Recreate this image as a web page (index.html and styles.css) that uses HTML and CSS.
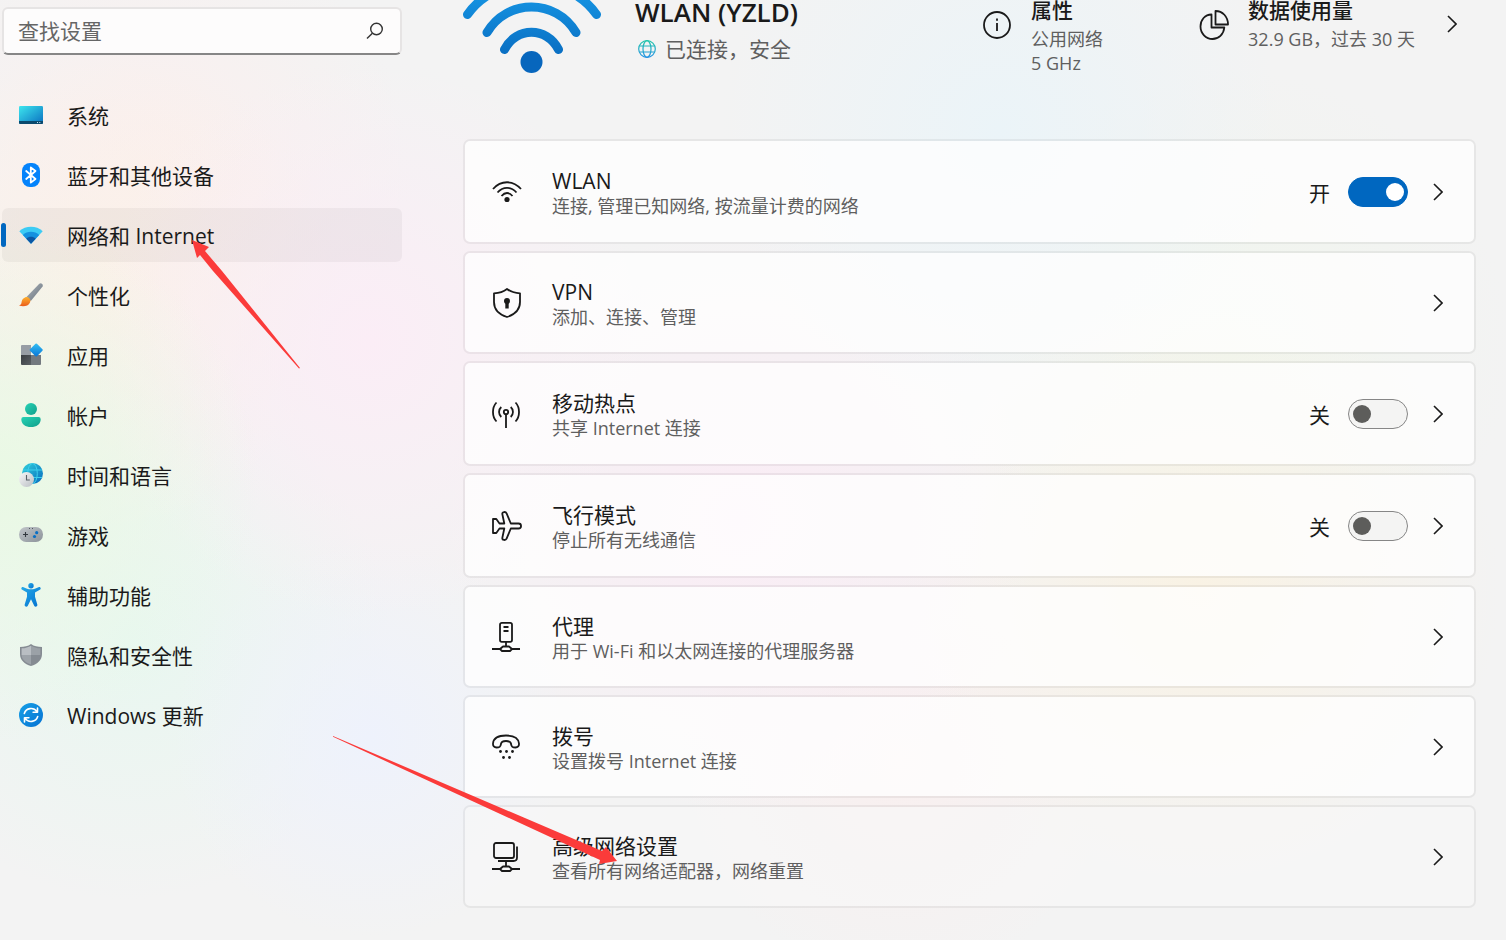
FILE: index.html
```html
<!DOCTYPE html>
<html lang="zh-CN">
<head>
    <meta charset="UTF-8">
    <meta name="viewport" content="width=device-width, initial-scale=1.0">
    <title>设置 - 网络和 Internet</title>
    <link rel="stylesheet" href="styles.css">
</head>
<body>
    <div class="page">
        <aside class="sidebar">
            <form class="search">
                <input class="search-input" type="text" placeholder="查找设置" aria-label="查找设置">
                <button class="search-button" type="button" aria-label="搜索">
                    <svg width="18" height="18" viewBox="0 0 18 18" fill="none" stroke="#333" stroke-width="1.4">
                        <circle cx="10.5" cy="7" r="5.8"/>
                        <path d="M6.4 11.2L1 16.6"/>
                    </svg>
                </button>
            </form>

            <nav class="menu">
                <a class="menu-item" href="#">
                    <svg class="menu-icon" viewBox="0 0 24 24">
                        <defs><linearGradient id="sys" x1="0" y1="0" x2="1" y2="1"><stop offset="0" stop-color="#3de6ee"/><stop offset="1" stop-color="#0a6fc0"/></linearGradient></defs>
                        <rect y="3" width="24" height="18" rx="1.3" fill="url(#sys)"/>
                        <path d="M0 18h24v1.7a1.3 1.3 0 0 1-1.3 1.3H1.3A1.3 1.3 0 0 1 0 19.700z" fill="#0b4a6e"/>
                        <path d="M18 19.500h1M20.300 19.500h1" stroke="#c9e8f5" stroke-width="1"/>
                    </svg>
                    <span>系统</span>
                </a>
                <a class="menu-item" href="#">
                    <svg class="menu-icon" viewBox="0 0 24 24">
                        <rect x="3" width="18" height="24" rx="8" fill="#0483fb"/>
                        <path d="M7.200 8l9.300 8-4.700 3.600V4.400L16.500 8l-9.300 8" fill="none" stroke="#fff" stroke-width="1.800" stroke-linejoin="round" stroke-linecap="round"/>
                    </svg>
                    <span>蓝牙和其他设备</span>
                </a>
                <a class="menu-item active" href="#" aria-current="page">
                    <svg class="menu-icon" viewBox="0 0 24 24">
                        <path d="M0.300 8.200C6.500 2.300 17.500 2.300 23.700 8.200L12 20.700z" fill="#3ccbf4"/>
                        <path d="M3.800 11.900C8.200 7.700 15.800 7.700 20.200 11.900L12 20.700z" fill="#1591df"/>
                        <path d="M7.300 15.700C9.900 13.200 14.100 13.200 16.700 15.700L12 20.700z" fill="#0b57a4"/>
                    </svg>
                    <span>网络和 Internet</span>
                </a>
                <a class="menu-item" href="#">
                    <svg class="menu-icon" viewBox="0 0 24 24">
                        <defs>
                            <linearGradient id="brush" x1="0" y1="0" x2="1" y2="1"><stop offset="0" stop-color="#b0b7be"/><stop offset="1" stop-color="#65707a"/></linearGradient>
                            <linearGradient id="bristle" x1="0" y1="0" x2="0" y2="1"><stop offset="0" stop-color="#fdb12c"/><stop offset="1" stop-color="#ea5c1c"/></linearGradient>
                        </defs>
                        <path d="M7.500 14L20.300.8c1.700-1.500 4.200.4 3.300 2.600L11.800 18z" fill="url(#brush)"/>
                        <path d="M6 14.500c3-1.700 6.600 1.800 5 5-1.700 3.800-6.700 4.600-11 3.100 2.500-.8 2.300-2 2.700-4 .4-2 1.500-3.300 3.300-4.100z" fill="url(#bristle)"/>
                    </svg>
                    <span>个性化</span>
                </a>
                <a class="menu-item" href="#">
                    <svg class="menu-icon" viewBox="0 0 24 24">
                        <defs>
                            <linearGradient id="appDark" x1="0" y1="0" x2="1" y2="1"><stop offset="0" stop-color="#3a3e42"/><stop offset="1" stop-color="#5b6065"/></linearGradient>
                            <linearGradient id="appBlue" x1="0" y1="0" x2="1" y2="1"><stop offset="0" stop-color="#35c1f3"/><stop offset="1" stop-color="#0874d7"/></linearGradient>
                        </defs>
                        <path d="M3 2h9v10H2V3a1 1 0 0 1 1-1z" fill="#979da4"/>
                        <path d="M2 12h10v10H3a1 1 0 0 1-1-1z" fill="url(#appDark)"/>
                        <path d="M12 12h10v9a1 1 0 0 1-1 1h-9z" fill="#73797f"/>
                        <rect x="12.300" y="2.100" width="9.800" height="9.800" rx="1" transform="rotate(45 17.200 7)" fill="url(#appBlue)"/>
                    </svg>
                    <span>应用</span>
                </a>
                <a class="menu-item" href="#">
                    <svg class="menu-icon" viewBox="0 0 24 24">
                        <defs><linearGradient id="user" x1="0" y1="0" x2="1" y2="1"><stop offset="0" stop-color="#27d3b5"/><stop offset="1" stop-color="#109f8b"/></linearGradient></defs>
                        <circle cx="12" cy="6" r="6" fill="url(#user)"/>
                        <path d="M4.500 14h15a2.200 2.200 0 0 1 2.200 2.200c0 5-4.200 7.800-9.700 7.800s-9.700-2.800-9.700-7.800A2.200 2.200 0 0 1 4.500 14z" fill="url(#user)"/>
                    </svg>
                    <span>帐户</span>
                </a>
                <a class="menu-item" href="#">
                    <svg class="menu-icon" viewBox="0 0 24 24">
                        <defs>
                            <linearGradient id="world" x1="0" y1="0" x2="1" y2="1"><stop offset="0" stop-color="#31d2dc"/><stop offset="1" stop-color="#0869be"/></linearGradient>
                            <linearGradient id="clock" x1="0" y1="0" x2="1" y2="1"><stop offset="0" stop-color="#fafafa"/><stop offset="1" stop-color="#b9bdc3"/></linearGradient>
                        </defs>
                        <circle cx="13.500" cy="10.500" r="10.500" fill="url(#world)"/>
                        <g fill="none" stroke="#3fd0ec" stroke-width="1"><ellipse cx="13.500" cy="10.500" rx="4.800" ry="10"/><path d="M4 7h19M4 14.500h19"/></g>
                        <circle cx="7.500" cy="16.500" r="7.500" fill="url(#clock)"/>
                        <path d="M7.500 12v5h3.300" fill="none" stroke="#596068" stroke-width="1.100"/>
                    </svg>
                    <span>时间和语言</span>
                </a>
                <a class="menu-item" href="#">
                    <svg class="menu-icon" viewBox="0 0 24 24">
                        <defs><linearGradient id="pad" x1="0" y1="0" x2="1" y2="1"><stop offset="0" stop-color="#c1c6ca"/><stop offset="1" stop-color="#8b9299"/></linearGradient></defs>
                        <rect y="4" width="24" height="15" rx="7.200" fill="url(#pad)"/>
                        <path d="M6.500 9v5M4 11.500h5" stroke="#33393f" stroke-width="1.100"/>
                        <path d="M10 5.500h1M13 5.500h1" stroke="#51585e" stroke-width="1"/>
                        <circle cx="17.700" cy="9.700" r="1.600" fill="#0a6fc4"/><circle cx="15.500" cy="13.500" r="1.600" fill="#0a6fc4"/>
                    </svg>
                    <span>游戏</span>
                </a>
                <a class="menu-item" href="#">
                    <svg class="menu-icon" viewBox="0 0 24 24">
                        <defs><linearGradient id="man" x1="0" y1="0" x2="1" y2="1"><stop offset="0" stop-color="#25a9e8"/><stop offset="1" stop-color="#0371cf"/></linearGradient></defs>
                        <g fill="url(#man)">
                            <circle cx="12" cy="2.700" r="2.700"/>
                            <path d="M4.500 4.200c2.400 1.200 4.700 2.100 7.500 2.100s5.100-.9 7.500-2.100c2-.8 3.100 1.700 1.300 2.600L16 9.400v4.400l2.300 7.800c.5 2-2.300 3.100-3.100 1.100L12 16.300l-3.200 6.400c-.8 2-3.600.9-3.100-1.100L8 13.800V9.400L3.200 6.800C1.400 5.900 2.500 3.400 4.500 4.200z"/>
                        </g>
                    </svg>
                    <span>辅助功能</span>
                </a>
                <a class="menu-item" href="#">
                    <svg class="menu-icon" viewBox="0 0 24 24">
                        <path d="M12 1c3 2.200 6.500 3 11 3v7c0 6-4.500 10-11 12C5.500 21 1 17 1 11V4c4.500 0 8-.8 11-3z" fill="#858b92"/>
                        <path d="M12 2.700V12H2.600V5.300C6.500 5.200 9.300 4.300 12 2.700z" fill="#b9bec3"/>
                        <path d="M12 2.700V12h9.400V5.300C17.500 5.200 14.700 4.300 12 2.700z" fill="#9ba1a7"/>
                        <path d="M12 12H2.600c.3 4.700 4 7.800 9.400 9.500z" fill="#9da3a9"/>
                    </svg>
                    <span>隐私和安全性</span>
                </a>
                <a class="menu-item" href="#">
                    <svg class="menu-icon" viewBox="0 0 24 24">
                        <defs><linearGradient id="upd" x1="0" y1="0" x2="1" y2="1"><stop offset="0" stop-color="#17a0e6"/><stop offset="1" stop-color="#0672d3"/></linearGradient></defs>
                        <circle cx="12" cy="12" r="12" fill="url(#upd)"/>
                        <path d="M5.300 10.500C7 4.800 14.500 3.800 18 8.600M18.700 13.500C17 19.200 9.500 20.200 6 15.400M18.500 5v4.300h-4.400M5.500 19v-4.300h4.400" fill="none" stroke="#fff" stroke-width="1.600" stroke-linecap="round" stroke-linejoin="round"/>
                    </svg>
                    <span>Windows 更新</span>
                </a>
            </nav>
        </aside>

        <main class="content">
            <header class="status">
                <svg class="status-wifi" width="138" height="75" viewBox="0 0 138 75">
                    <defs><linearGradient id="wifi" gradientUnits="userSpaceOnUse" x1="0" y1="0" x2="0" y2="75"><stop offset="0" stop-color="#1490df"/><stop offset="1" stop-color="#0562b8"/></linearGradient></defs>
                    <g fill="none" stroke="url(#wifi)" stroke-width="9" stroke-linecap="round">
                        <path d="M4.500 14.500C34-27.500 104-27.500 133.500 14.500"/>
                        <path d="M24 32.500C44-1.500 93-1.500 113 32.500"/>
                        <path d="M41.500 49.500C53 26.500 84 26.500 95.500 49.500"/>
                    </g>
                    <circle cx="68.500" cy="62" r="11" fill="#0766bd"/>
                </svg>
                <div class="status-name">
                    <h1>WLAN (YZLD)</h1>
                    <p>
                        <svg width="18" height="18" viewBox="0 0 18 18" fill="none" stroke="url(#globe)" stroke-width="1.200">
                            <defs><linearGradient id="globe" gradientUnits="userSpaceOnUse" x1="0" y1="0" x2="0" y2="18"><stop offset="0" stop-color="#22c7a8"/><stop offset="1" stop-color="#2491e6"/></linearGradient></defs>
                            <circle cx="9" cy="9" r="8.300"/><ellipse cx="9" cy="9" rx="4" ry="8.300"/><path d="M1.500 6h15M1.500 12h15"/>
                        </svg>
                        已连接，安全
                    </p>
                </div>
                <a class="status-link" href="#">
                    <svg width="30" height="30" viewBox="0 0 30 30" fill="none" stroke="#1a1a1a" stroke-width="1.800">
                        <circle cx="15" cy="15" r="13"/><path d="M15 13v8M15 8.500v2.200"/>
                    </svg>
                    <span class="status-text">
                        <strong>属性</strong>
                        <small>公用网络</small>
                        <small>5 GHz</small>
                    </span>
                </a>
                <a class="status-link" href="#">
                    <svg width="30" height="30" viewBox="0 0 30 30" fill="none" stroke="#1a1a1a" stroke-width="1.800" stroke-linejoin="round">
                        <path d="M12.500 4.500C6 4.500 1.500 9.800 1.500 16.500S6.800 29 13.500 29c6 0 11.200-4.500 11.800-11.500H12.500z"/>
                        <path d="M16.500 1c7 0 12.500 5.500 12.500 13.500H16.500z"/>
                    </svg>
                    <span class="status-text">
                        <strong>数据使用量</strong>
                        <small>32.9 GB，过去 30 天</small>
                    </span>
                    <svg class="status-chevron" width="10" height="18" viewBox="0 0 10 18"><path d="M1 1l8 8-8 8"/></svg>
                </a>
            </header>

            <ul class="cards">
                <li class="card card-switch">
                    <a class="card-link" href="#">
                        <svg class="card-icon" viewBox="0 0 30 30">
                            <path d="M1 12C9 3 21 3 29 12M5.500 15.500c5.500-6.300 13.500-6.300 19 0M9.500 19c3.500-4 7.500-4 11 0"/>
                            <circle cx="15" cy="22.500" r="2.600" class="solid"/>
                        </svg>
                        <span class="card-text"><strong>WLAN</strong><small>连接, 管理已知网络, 按流量计费的网络</small></span>
                    </a>
                    <label class="switch">开 <input type="checkbox" checked></label>
                    <button class="more" type="button" aria-label="WLAN"><svg width="10" height="18" viewBox="0 0 10 18"><path d="M1 1l8 8-8 8"/></svg></button>
                </li>
                <li class="card">
                    <a class="card-link" href="#">
                        <svg class="card-icon" viewBox="0 0 30 30">
                            <path d="M15 1c3.500 2.700 7.500 4 13 4.300V14c0 7.500-4.500 12.300-13 15C6.500 26.300 2 21.500 2 14V5.300C7.500 5 11.500 3.700 15 1z"/>
                            <path d="M15 14v6.500" stroke-width="3.400"/>
                            <circle cx="15" cy="13" r="3" class="solid"/>
                        </svg>
                        <span class="card-text"><strong>VPN</strong><small>添加、连接、管理</small></span>
                    </a>
                    <button class="more" type="button" aria-label="VPN"><svg width="10" height="18" viewBox="0 0 10 18"><path d="M1 1l8 8-8 8"/></svg></button>
                </li>
                <li class="card card-switch">
                    <a class="card-link" href="#">
                        <svg class="card-icon" viewBox="0 0 30 30">
                            <circle cx="14" cy="13" r="2.200"/>
                            <path d="M14 15.500V29M9.300 8c-3 2.600-3 7.400 0 10M18.700 8c3 2.600 3 7.400 0 10M4.500 3.500c-4.700 5-4.700 14 0 19M23.500 3.500c4.700 5 4.700 14 0 19"/>
                        </svg>
                        <span class="card-text"><strong>移动热点</strong><small>共享 Internet 连接</small></span>
                    </a>
                    <label class="switch">关 <input type="checkbox"></label>
                    <button class="more" type="button" aria-label="移动热点"><svg width="10" height="18" viewBox="0 0 10 18"><path d="M1 1l8 8-8 8"/></svg></button>
                </li>
                <li class="card card-switch">
                    <a class="card-link" href="#">
                        <svg class="card-icon" viewBox="0 0 30 30">
                            <path d="M12.300 12.500L10.300 3c-.3-2.200 3.300-2.800 4.300-.7L18.800 12.500H26.500c3.400 0 3.400 5 0 5H18.800l-4.200 10.200c-1 2.100-4.600 1.500-4.300-.7L12.300 17.500H7.500L4.300 22H1V8h3.300L7.500 12.500z"/>
                        </svg>
                        <span class="card-text"><strong>飞行模式</strong><small>停止所有无线通信</small></span>
                    </a>
                    <label class="switch">关 <input type="checkbox"></label>
                    <button class="more" type="button" aria-label="飞行模式"><svg width="10" height="18" viewBox="0 0 10 18"><path d="M1 1l8 8-8 8"/></svg></button>
                </li>
                <li class="card">
                    <a class="card-link" href="#">
                        <svg class="card-icon" viewBox="0 0 30 30">
                            <rect x="8" y="0.900" width="12" height="19" rx="1.800"/>
                            <path d="M11.500 5h5M11.500 9h5M14 20v4M0 27h8M20 27h8"/>
                            <path d="M11 24.500h6l3 2.500-2 2h-8l-2-2z"/>
                        </svg>
                        <span class="card-text"><strong>代理</strong><small>用于 Wi-Fi 和以太网连接的代理服务器</small></span>
                    </a>
                    <button class="more" type="button" aria-label="代理"><svg width="10" height="18" viewBox="0 0 10 18"><path d="M1 1l8 8-8 8"/></svg></button>
                </li>
                <li class="card">
                    <a class="card-link" href="#">
                        <svg class="card-icon" viewBox="0 0 30 30">
                            <path d="M1 11.500C1.500 6 7 3.500 14 3.500s12.500 2.500 13 8c.2 2.500-1.200 4-3.500 4-3 0-4-.5-4.500-3.500-.2-2-1-3-5-3s-4.800 1-5 3c-.5 3-1.500 3.500-4.500 3.500-2.300 0-3.700-1.500-3.500-4z"/>
                            <g class="solid"><circle cx="8.500" cy="19.500" r="1.400"/><circle cx="14.500" cy="19.500" r="1.400"/><circle cx="20.500" cy="19.500" r="1.400"/><circle cx="11.500" cy="25.500" r="1.400"/><circle cx="17.500" cy="25.500" r="1.400"/></g>
                        </svg>
                        <span class="card-text"><strong>拨号</strong><small>设置拨号 Internet 连接</small></span>
                    </a>
                    <button class="more" type="button" aria-label="拨号"><svg width="10" height="18" viewBox="0 0 10 18"><path d="M1 1l8 8-8 8"/></svg></button>
                </li>
                <li class="card card-hover">
                    <a class="card-link" href="#">
                        <svg class="card-icon" viewBox="0 0 30 30">
                            <rect x="2" y="1" width="20" height="15" rx="2"/>
                            <path d="M25 4.500v11c0 2.500-1.300 3.500-3.500 3.500H6M14 19v5M0 27h8M20 27h8"/>
                            <path d="M11 24.500h6l3 2.500-2 2h-8l-2-2z"/>
                        </svg>
                        <span class="card-text"><strong>高级网络设置</strong><small>查看所有网络适配器，网络重置</small></span>
                    </a>
                    <button class="more" type="button" aria-label="高级网络设置"><svg width="10" height="18" viewBox="0 0 10 18"><path d="M1 1l8 8-8 8"/></svg></button>
                </li>
            </ul>
        </main>
    </div>

    <!-- Setas vermelhas por cima da tela -->
    <svg class="arrow arrow-menu" width="108" height="129" viewBox="0 0 108 129"><path d="M0 0l17 7-4 4 17 20L108 128l-1 .5L21 31 8 15l-3 3z"/></svg>
    <svg class="arrow arrow-card" width="285" height="130" viewBox="0 0 285 130"><path d="M0 0L269 115l4-4 11 14-18 3 1-4L0 .8z"/></svg>
</body>
</html>
```
FILE: styles.css
```css
* {
    box-sizing: border-box;
}

body {
    margin: 0;
    min-height: 100vh;
    font-family: "Open Sans", "Noto Sans CJK SC", sans-serif;
    font-size: 21px;
    color: #1a1a1a;
    background-color: #f3f3f3;
    background-image:
        radial-gradient(circle at 0 480px, #e9f9e4 0, transparent 260px),
        radial-gradient(circle at 370px 340px, #fbedf6 0, transparent 280px),
        radial-gradient(circle at 100px 290px, #fbf1e8 0, transparent 240px),
        radial-gradient(circle at 150px 170px, #fbefee 0, transparent 260px),
        radial-gradient(circle at 370px 740px, #eef2fc 0, transparent 200px),
        radial-gradient(circle at 130px 640px, #e8f7f0 0, transparent 260px),
        radial-gradient(circle at 1000px 130px, #ebf4f8 0, transparent 280px),
        radial-gradient(circle at 740px 520px, #faecf5 0, transparent 300px),
        radial-gradient(circle at 1200px 590px, #f9f2e4 0, transparent 300px),
        radial-gradient(circle at 1230px 350px, #f0f5ed 0, transparent 280px),
        radial-gradient(circle at 900px 760px, #f9efef 0, transparent 220px); /* manchas de cor do fundo */
    background-repeat: no-repeat;
}

a {
    color: inherit;
    text-decoration: none;
}

button {
    padding: 0;
    border: 0;
    background: none;
    cursor: pointer;
}

svg {
    display: block;
    flex: none;
}

.page {
    display: grid;
    grid-template-columns: 400px 1fr;
    gap: 61px;
    padding: 0 30px 30px 2px;
}

/* Menu lateral */
.search {
    display: flex;
    align-items: center;
    height: 48px;
    margin-top: 7px;
    padding: 0 16px 0 14px;
    background-color: #fdfcfc;
    border: 2px solid #e6e4e4;
    border-bottom-color: #868686;
    border-radius: 6px;
}

.search-input {
    flex: 1;
    min-width: 0;
    padding: 0;
    border: 0;
    outline: 0;
    background: none;
    font: inherit;
}

.search-input::placeholder {
    color: #666;
    opacity: 1;
}

.menu {
    display: flex;
    flex-direction: column;
    gap: 6px;
    margin-top: 33px;
}

.menu-item {
    display: flex;
    align-items: center;
    gap: 24px;
    height: 54px;
    padding-left: 17px;
    border-radius: 6px;
}

.menu-icon {
    width: 24px;
    height: 24px;
}

.menu-item.active {
    position: relative;
    background-color: rgba(0, 0, 0, 0.04);
}

.menu-item.active::before {
    content: "";
    position: absolute;
    left: -1px;
    top: 15px;
    width: 5px;
    height: 24px;
    border-radius: 3px;
    background-color: #0067c0;
}

/* Cabeçalho da rede */
.status {
    display: flex;
    align-items: flex-start;
    height: 139px;
}

.status-name {
    flex: 1;
    padding-left: 34px;
}

.status-name h1 {
    margin: 0;
    font-size: 26px;
    line-height: 24px;
    font-weight: 600;
}

.status-name p {
    display: flex;
    align-items: center;
    gap: 9px;
    margin: 10px 0 0 3px;
    line-height: 30px;
    color: #5f5f5f;
}

.status-link {
    display: flex;
    gap: 19px;
}

.status-link > svg {
    margin-top: 10px;
}

.status-link + .status-link {
    margin-left: 96px;
}

.status-text {
    display: flex;
    flex-direction: column;
}

.status-text strong {
    font-weight: 500;
    line-height: 20px;
    margin-bottom: 7px;
}

.status-text small {
    font-size: 18px;
    line-height: 24px;
    color: #5f5f5f;
}

.status-link > .status-chevron {
    margin: 15px 19px 0 13px;
}

.status-chevron,
.more svg {
    fill: none;
    stroke: #1a1a1a;
    stroke-width: 1.6;
}

/* Lista de opções */
.cards {
    display: flex;
    flex-direction: column;
    gap: 7px;
    margin: 0;
    padding: 0;
    list-style: none;
}

.card {
    display: flex;
    align-items: center;
    min-height: 103px;
    padding: 0 31px 0 27px;
    background-color: rgba(255, 255, 255, 0.75);
    background-clip: padding-box;
    border: 2px solid rgba(0, 0, 0, 0.05);
    border-radius: 7px;
}

.card-switch {
    min-height: 105px;
}

.card-hover {
    background-color: rgba(249, 249, 249, 0.6);
}

.card-link {
    flex: 1;
    display: flex;
    align-items: center;
    gap: 30px;
}

.card-icon {
    width: 30px;
    height: 30px;
    fill: none;
    stroke: #1a1a1a;
    stroke-width: 1.8;
    stroke-linejoin: round;
}

.card-icon .solid {
    fill: #1a1a1a;
    stroke: none;
}

.card-text {
    display: flex;
    flex-direction: column;
    padding-top: 2px;
}

.card-text strong {
    font-weight: 400;
    line-height: 26px;
}

.card-text small {
    font-size: 18px;
    line-height: 24px;
    color: #5f5f5f;
}

.switch {
    display: flex;
    align-items: center;
    gap: 18px;
    margin-right: 25px;
}

.switch input {
    appearance: none;
    display: flex;
    align-items: center;
    width: 60px;
    height: 30px;
    margin: 0;
    padding: 0 4px;
    border: 1px solid #868686;
    border-radius: 15px;
    background-color: #f4f4f3;
}

.switch input::before {
    content: "";
    width: 18px;
    height: 18px;
    border-radius: 50%;
    background-color: #5d5d5b;
}

.switch input:checked {
    justify-content: flex-end;
    padding: 0 3px;
    border-color: #0067c0;
    background-color: #0067c0;
}

.switch input:checked::before {
    background-color: #fff;
}

/* Setas */
.arrow {
    position: absolute;
    fill: #fb3b3a;
    pointer-events: none;
}

.arrow-menu {
    left: 192px;
    top: 240px;
}

.arrow-card {
    left: 333px;
    top: 736px;
}
```
